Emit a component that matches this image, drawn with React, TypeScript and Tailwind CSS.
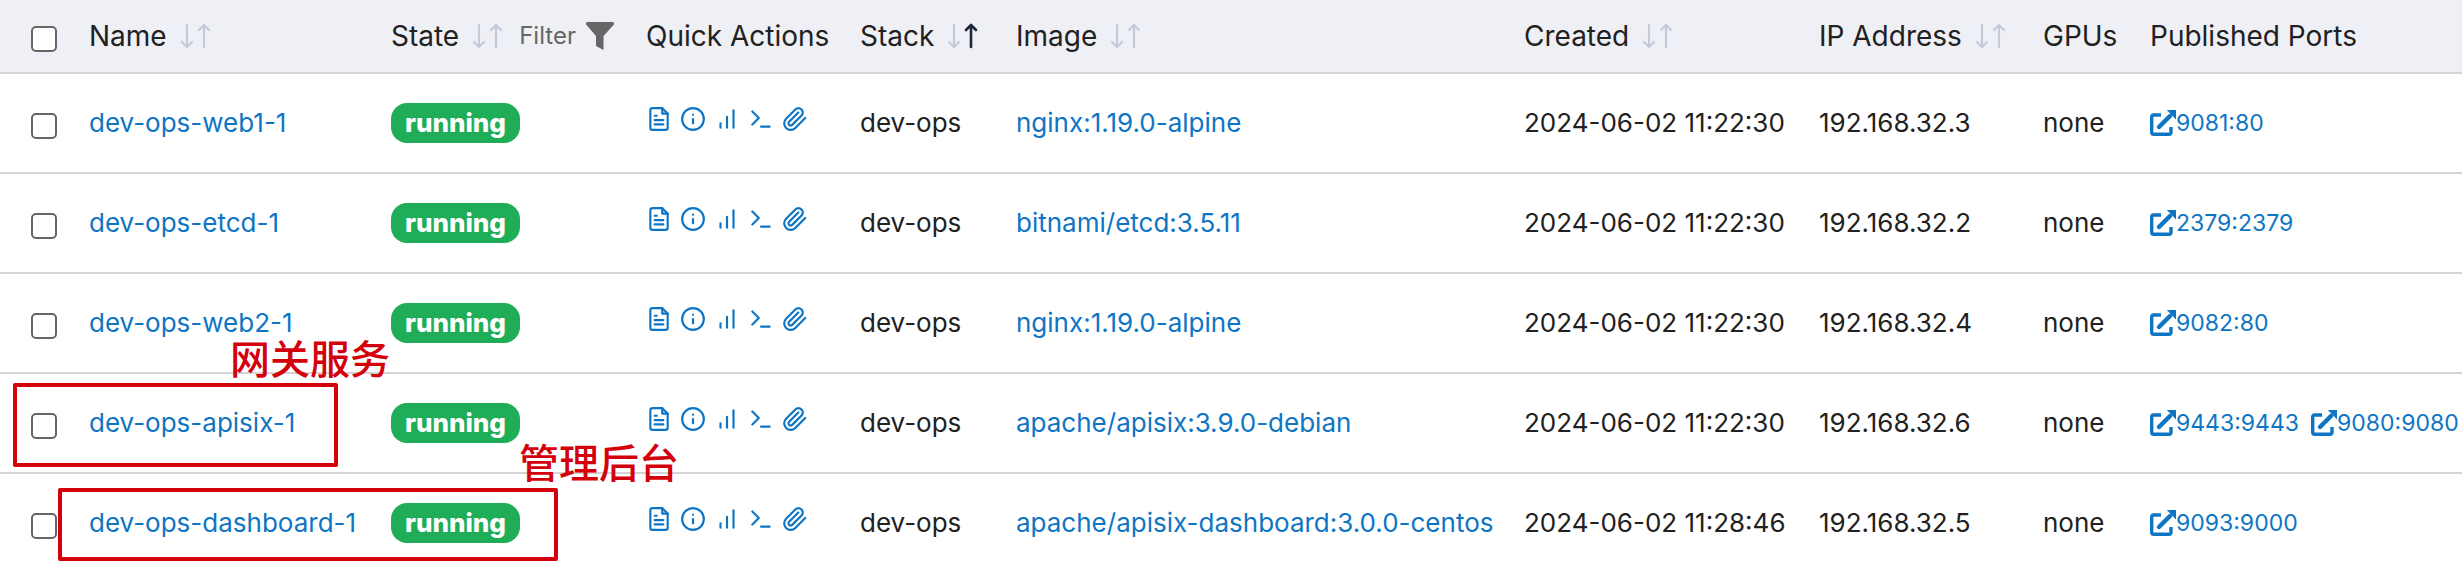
import { ReactNode } from "react";

const stroke = {
  fill: "none",
  stroke: "currentColor",
  strokeWidth: 2,
  strokeLinecap: "round" as const,
  strokeLinejoin: "round" as const,
};

function QuickIcon({ label, children }: { label: string; children: ReactNode }) {
  return (
    <a href="#" aria-label={label} className="block">
      <svg viewBox="0 0 24 24" className="block size-[26px]" {...stroke}>
        {children}
      </svg>
    </a>
  );
}

function QuickActions() {
  return (
    <div className="flex gap-2 pb-2 text-[#0e75c4]">
      <QuickIcon label="Logs">
        <path d="M15 2H6a2 2 0 0 0-2 2v16a2 2 0 0 0 2 2h12a2 2 0 0 0 2-2V7z" />
        <path d="M15 2v5h5" />
        <path d="M16 13H8M16 17H8M10 9H8" />
      </QuickIcon>
      <QuickIcon label="Inspect">
        <circle cx="12" cy="12" r="10" />
        <path d="M12 16v-4M12 8h.01" />
      </QuickIcon>
      <QuickIcon label="Stats">
        <path d="M12 20V10M18 20V4M6 20v-4" />
      </QuickIcon>
      <QuickIcon label="Exec console">
        <path d="M4 17l6-6-6-6M12 19h8" />
      </QuickIcon>
      <QuickIcon label="Attach console">
        <path d="m21.44 11.05-9.19 9.19a6 6 0 0 1-8.49-8.49l8.57-8.57A4 4 0 1 1 18 8.84l-8.59 8.57a2 2 0 0 1-2.83-2.83l8.49-8.48" />
      </QuickIcon>
    </div>
  );
}

function SortButton({ label, active = false }: { label: string; active?: boolean }) {
  return (
    <button type="button" className="flex items-center gap-3">
      {label}
      <svg viewBox="0 0 32 32" className="block size-8 text-[#c5cad8]" {...stroke}>
        <path d="M8 5v22M3 22l5 5 5-5" strokeWidth="2.2" />
        <path d="M25 27V5M20 10l5-5 5 5" className={active ? "text-[#1d2939]" : ""} stroke="currentColor" strokeWidth={active ? 2.6 : 2.2} />
      </svg>
    </button>
  );
}

function PortLink({ port }: { port: string }) {
  return (
    <a href="#" className="flex items-center text-[23px] text-[#0e75c4]">
      <svg viewBox="0 0 26 26" className="block size-[26px]" fill="none" stroke="currentColor" strokeWidth="3.4">
        <path d="M11 5H3.7Q1.7 5 1.7 7v15.3q0 2 2 2h15.3q2 0 2-2V17" />
        <path d="M9 17 20 6" strokeWidth="4.4" strokeLinecap="round" />
        <path d="M16.800 0H26v9.500z" fill="currentColor" stroke="none" />
      </svg>
      {port}
    </a>
  );
}

const box = "block size-[26px] appearance-none rounded-[5px] border-2 border-[#666] bg-white";

const rows = [
  { name: "dev-ops-web1-1", image: "nginx:1.19.0-alpine", created: "2024-06-02 11:22:30", ip: "192.168.32.3", ports: ["9081:80"] },
  { name: "dev-ops-etcd-1", image: "bitnami/etcd:3.5.11", created: "2024-06-02 11:22:30", ip: "192.168.32.2", ports: ["2379:2379"] },
  { name: "dev-ops-web2-1", image: "nginx:1.19.0-alpine", created: "2024-06-02 11:22:30", ip: "192.168.32.4", ports: ["9082:80"] },
  { name: "dev-ops-apisix-1", image: "apache/apisix:3.9.0-debian", created: "2024-06-02 11:22:30", ip: "192.168.32.6", ports: ["9443:9443", "9080:9080"] },
  { name: "dev-ops-dashboard-1", image: "apache/apisix-dashboard:3.0.0-centos", created: "2024-06-02 11:28:46", ip: "192.168.32.5", ports: ["9093:9000"] },
];

export default function App() {
  return (
    <div className="relative overflow-hidden bg-white font-['Inter',sans-serif] text-[26px] leading-9 text-[#212121]">
      <table className="w-full table-fixed border-separate border-spacing-0 whitespace-nowrap text-left">
        <colgroup>
          <col className="w-[89px]" />
          <col className="w-[302px]" />
          <col className="w-[255px]" />
          <col className="w-[214px]" />
          <col className="w-[156px]" />
          <col className="w-[508px]" />
          <col className="w-[295px]" />
          <col className="w-[224px]" />
          <col className="w-[107px]" />
          <col />
        </colgroup>
        <thead>
          <tr className="h-[74px] bg-[#eff0f5] text-[28px] *:border-b-2 *:border-[#d4d4d4] *:p-0 *:font-normal">
            <th className="pl-[31px]!">
              <input type="checkbox" aria-label="Select all containers" className={`${box} mt-1.5`} />
            </th>
            <th><SortButton label="Name" /></th>
            <th>
              <div className="flex items-center gap-4">
                <SortButton label="State" />
                <button type="button" className="flex items-center gap-2.5 text-2xl text-[#666]">
                  Filter
                  <svg viewBox="0 0 28 28" className="block size-7" fill="currentColor">
                    <path d="M1 0h26q2 1 .5 3L17.500 14v14L10 24V14L.5 3Q-1 1 1 0z" />
                  </svg>
                </button>
              </div>
            </th>
            <th>Quick Actions</th>
            <th><SortButton label="Stack" active /></th>
            <th><SortButton label="Image" /></th>
            <th><SortButton label="Created" /></th>
            <th><SortButton label="IP Address" /></th>
            <th>GPUs</th>
            <th>Published Ports</th>
          </tr>
        </thead>
        <tbody>
          {rows.map((row) => (
            <tr key={row.name} className="h-[100px] *:border-b-2 *:border-[#d4d4d4] *:p-0 last:h-[98px] last:*:border-b-0">
              <td className="pl-[31px]!">
                <input type="checkbox" aria-label={`Select ${row.name}`} className={`${box} mt-1.5`} />
              </td>
              <td><a href="#" className="text-[#0e75c4]">{row.name}</a></td>
              <td>
                <span className="block w-fit rounded-2xl bg-[#1fad58] px-3.5 leading-10 font-extrabold text-white">running</span>
              </td>
              <td><QuickActions /></td>
              <td>dev-ops</td>
              <td><a href="#" className="text-[#0e75c4]">{row.image}</a></td>
              <td>{row.created}</td>
              <td>{row.ip}</td>
              <td>none</td>
              <td>
                <div className="flex gap-3">
                  {row.ports.map((port) => <PortLink key={port} port={port} />)}
                </div>
              </td>
            </tr>
          ))}
        </tbody>
      </table>

      <div className="pointer-events-none absolute top-[383px] left-[13px] h-[84px] w-[325px] rounded-xs border-4 border-[#d4000c]" />
      <div className="pointer-events-none absolute top-[488px] left-[58px] h-[73px] w-[500px] rounded-xs border-4 border-[#d4000c]" />
      <p className="pointer-events-none absolute top-[337px] left-[230px] font-['Noto_Sans_CJK_SC',sans-serif] text-[40px] leading-10 font-medium text-[#d4000c]">网关服务</p>
      <p className="pointer-events-none absolute top-[441px] left-[519px] font-['Noto_Sans_CJK_SC',sans-serif] text-[40px] leading-10 font-medium text-[#d4000c]">管理后台</p>
    </div>
  );
}
